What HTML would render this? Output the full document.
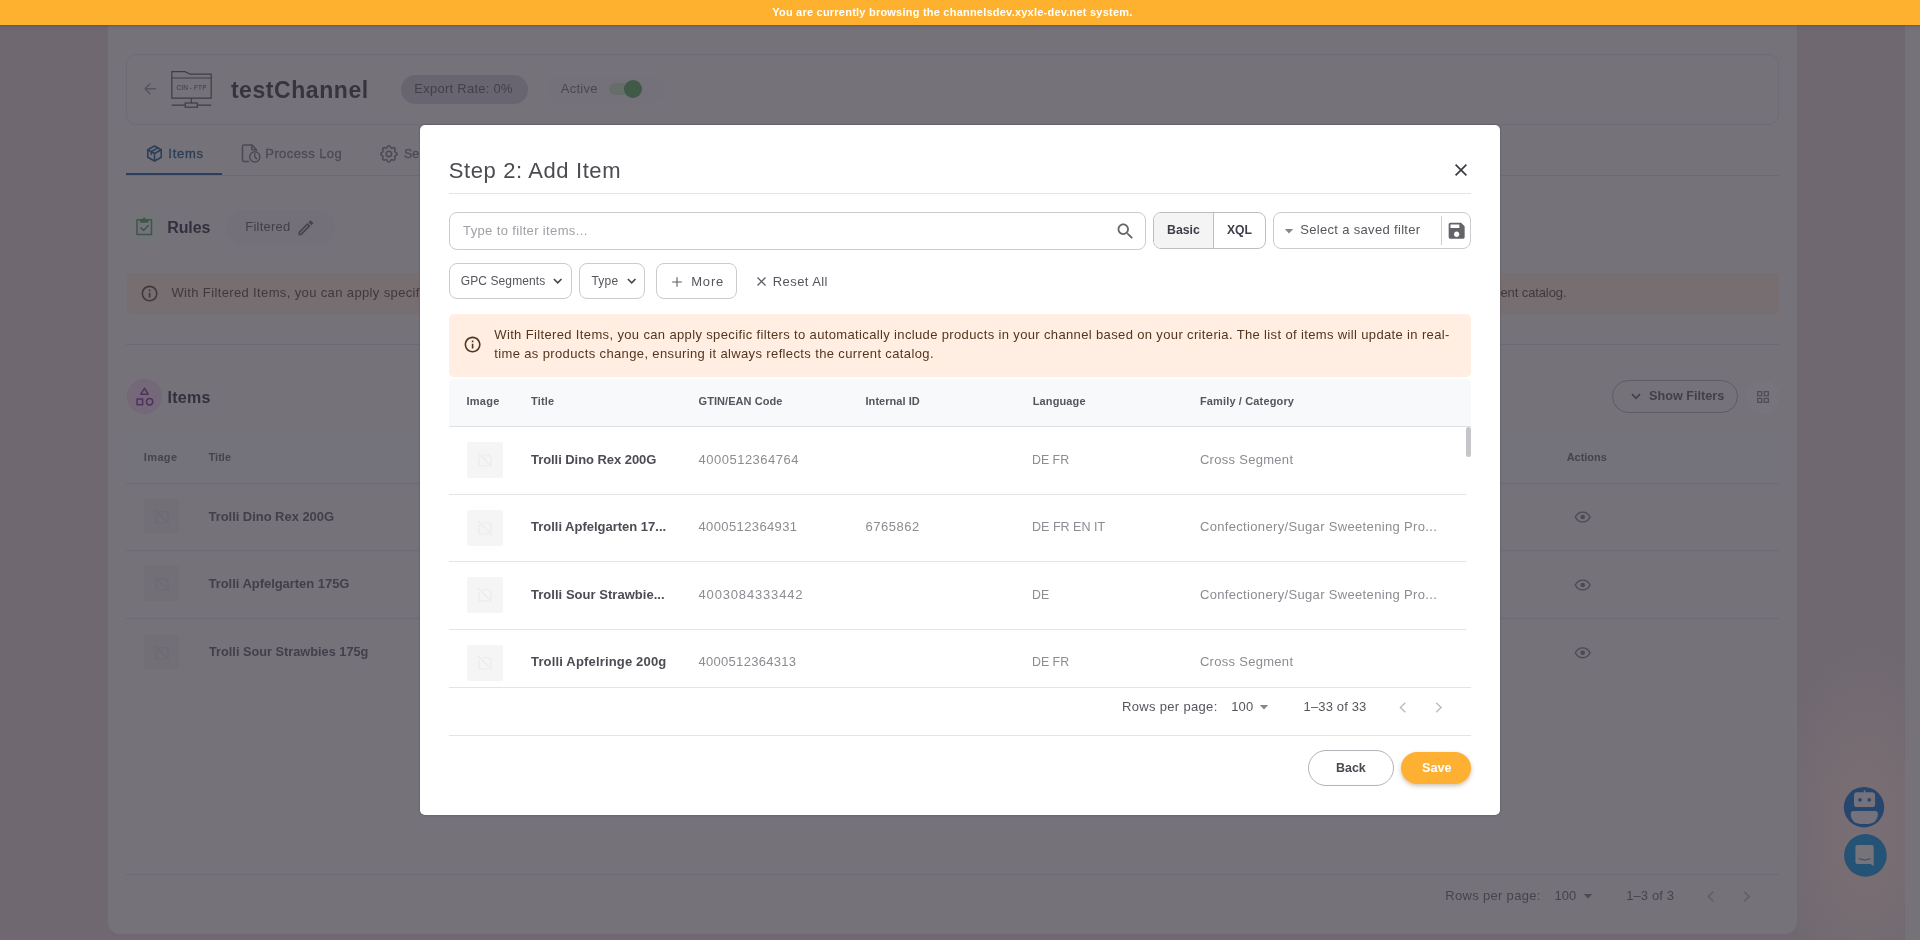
<!DOCTYPE html>
<html>
<head>
<meta charset="utf-8">
<title>Step 2: Add Item</title>
<style>
*{box-sizing:border-box;margin:0;padding:0}
html,body{width:1920px;height:940px;overflow:hidden}
body{font-family:"Liberation Sans",sans-serif;background:#6f6870;position:relative}
.a{position:absolute}
.t{position:absolute;white-space:pre;line-height:1}
.L{position:absolute;left:0;top:0;width:1920px;height:940px;will-change:transform}
svg{position:absolute;overflow:visible}
#topbar{left:0;top:0;width:1920px;height:25px;background:#fdb12e;box-shadow:0 0 1px rgba(90,60,0,.85),0 2px 4px rgba(70,60,80,.22)}
#rband{left:1797px;top:25px;width:108px;height:915px;background:#6f6870}
#rscroll{left:1905px;top:25px;width:15px;height:915px;background:#75727a}
#glow{left:1797px;top:640px;width:108px;height:300px;background:radial-gradient(ellipse 90px 190px at 68px 190px,rgba(121,110,115,1) 0%,rgba(119,109,115,.85) 50%,rgba(112,104,111,0) 100%)}
#panel{left:108px;top:0;width:1689px;height:934px;background:#75727a;border-radius:0 0 12px 12px}
#card{left:126px;top:54px;width:1653px;height:71px;border:1px solid #6e6b74;border-radius:10px}
.ln{position:absolute;height:1px;background:#6d6a73}
#modal{left:419.700px;top:124.600px;width:1080px;height:690.200px;background:#fff;border-radius:5px;box-shadow:0 0 2px rgba(45,40,55,.45)}
.hr{position:absolute;height:1px;background:#e4e4e8}
.box{position:absolute;border:1px solid #cbcbcf;border-radius:8px;background:#fff}
.ph{position:absolute;width:36px;height:36px;background:#f5f5f6;border-radius:2px}
.bph{position:absolute;width:35px;height:35px;background:#726f77;border-radius:2px}
</style>
</head>
<body>
<!-- ============ dimmed background page ============ -->
<div id="rband" class="a"></div>
<div id="glow" class="a"></div>
<div id="rscroll" class="a"></div>
<div id="panel" class="a"></div>
<div id="card" class="a"></div>
<!-- back arrow -->
<svg style="left:0;top:0" width="1920" height="940" viewBox="0 0 1920 940"><path d="M155.500 88.800 H145 M149.800 84 L145 88.800 L149.800 93.600" stroke="#58555f" stroke-width="1.500" fill="none" stroke-linecap="round" stroke-linejoin="round"/></svg>
<!-- folder ftp icon -->
<svg style="left:0;top:0;will-change:transform" width="1920" height="940" viewBox="0 0 1920 940"><g fill="none" stroke="#403c47" stroke-width="1.200"><path d="M171.800 98.200 V71.600 H184.800 L190.300 74.200 H211.200 V98.200 Z"/><path d="M171.800 78 H211.200"/><path d="M191.300 98.200 V103"/><path d="M171.800 105.100 H185.200 M197.300 105.100 H211.200"/><rect x="185.200" y="103" width="12.100" height="4.200"/></g><text x="191.500" y="90" text-anchor="middle" font-family="Liberation Sans, sans-serif" font-size="6.400" letter-spacing="0.150" fill="#3d3944">CIN - FTP</text></svg>
<!-- export pill / active pill -->
<div class="a" style="left:401px;top:75px;width:127px;height:29px;border-radius:15px;background:#686570"></div>
<div class="a" style="left:548px;top:75px;width:116px;height:29px;border-radius:15px;background:#74717a"></div>
<div class="a" style="left:609px;top:83px;width:33px;height:12px;border-radius:6px;background:#666e69"></div>
<div class="a" style="left:624px;top:80px;width:18px;height:18px;border-radius:9px;background:#3f5a46"></div>
<!-- tabs -->
<div class="ln" style="left:126px;top:175px;width:1653px"></div>
<div class="a" style="left:126px;top:173px;width:96px;height:2px;background:#2b3f5d"></div>
<svg style="left:145px;top:144px" width="19" height="19" viewBox="0 0 24 24"><g fill="none" stroke="#2b3e5a" stroke-width="2" stroke-linejoin="round" stroke-linecap="round"><path d="M12 2.5l8.5 4.8v9.4L12 21.5l-8.500-4.800V7.300z"/><path d="M12 12l8.500-4.700M12 12v9.500M12 12L3.500 7.300M16.300 4.900l-8.500 4.800v3.400"/></g></svg>
<svg style="left:0;top:0" width="1920" height="940" viewBox="0 0 1920 940"><g fill="none" stroke="#4d4a54" stroke-width="1.500" stroke-linejoin="round" stroke-linecap="round"><path d="M248.500 161.600 H244 a1.500 1.500 0 0 1 -1.500 -1.500 V146.600 a1.500 1.500 0 0 1 1.500 -1.500 H252 L256.300 149.500 V150.500"/><path d="M251.800 145.300 V149.700 H256.200"/><circle cx="254.800" cy="156.800" r="5.100"/><path d="M254.800 153.800 V157 L256.600 158.600"/></g></svg>
<svg style="left:377.600px;top:142.900px" width="21.800" height="21.800" viewBox="0 0 24 24"><g fill="none" stroke="#4d4a54" stroke-width="1.700" stroke-linejoin="round"><path d="M10.325 4.317c.426-1.756 2.924-1.756 3.350 0a1.724 1.724 0 0 0 2.573 1.066c1.543-.94 3.310.826 2.370 2.370a1.724 1.724 0 0 0 1.065 2.572c1.756.426 1.756 2.924 0 3.350a1.724 1.724 0 0 0-1.066 2.573c.94 1.543-.826 3.310-2.370 2.370a1.724 1.724 0 0 0-2.572 1.065c-.426 1.756-2.924 1.756-3.350 0a1.724 1.724 0 0 0-2.573-1.066c-1.543.94-3.310-.826-2.370-2.370a1.724 1.724 0 0 0-1.065-2.572c-1.756-.426-1.756-2.924 0-3.350a1.724 1.724 0 0 0 1.066-2.573c-.94-1.543.826-3.310 2.370-2.370 1 .608 2.296.070 2.572-1.065z"/><circle cx="12" cy="12" r="3"/></g></svg>
<!-- Rules -->
<div class="a" style="left:126.500px;top:209.500px;width:35px;height:35px;border-radius:18px;background:#727478"></div>
<svg style="left:0;top:0" width="1920" height="940" viewBox="0 0 1920 940"><g fill="none" stroke="#40544a" stroke-width="1.500" stroke-linejoin="round" stroke-linecap="round"><path d="M141 219.800 H137 V234.500 H151.500 V219.800 H147.500"/><path d="M140.800 220 H147.700 V222 H140.800 Z" fill="#40544a"/><path d="M143 219.800 a1.300 1.300 0 0 1 2.600 0"/><path d="M140.900 227.900 L143.500 230.500 L148.300 225.500"/></g></svg>
<div class="a" style="left:227px;top:210px;width:108px;height:35px;border-radius:18px;background:#737079"></div>
<svg style="left:295.600px;top:218px" width="19.600" height="19.600" viewBox="0 0 24 24"><path fill="#47434d" d="M14.060 9.020l.920.920L5.920 19H5v-.920l9.060-9.060M17.660 3c-.250 0-.510.100-.700.290l-1.830 1.830 3.750 3.750 1.830-1.830c.390-.390.390-1.020 0-1.410l-2.340-2.340c-.200-.200-.450-.290-.710-.290zm-3.600 3.190L3 17.250V21h3.750L17.810 9.940l-3.750-3.750z"/></svg>
<!-- bg alert -->
<div class="a" style="left:127px;top:272.500px;width:1652px;height:41.500px;border-radius:4px;background:#776e72"></div>
<svg style="left:140.200px;top:284.400px" width="19.200" height="19.200" viewBox="0 0 24 24"><path fill="#443739" d="M11 7h2v2h-2zm0 4h2v6h-2zm1-9C6.480 2 2 6.480 2 12s4.480 10 10 10 10-4.480 10-10S17.520 2 12 2zm0 18c-4.410 0-8-3.590-8-8s3.590-8 8-8 8 3.590 8 8-3.590 8-8 8z"/></svg>
<div class="ln" style="left:126px;top:344px;width:1653px"></div>
<!-- Items heading -->
<div class="a" style="left:126.500px;top:379px;width:35px;height:35px;border-radius:18px;background:#746879"></div>
<svg style="left:0;top:0" width="1920" height="940" viewBox="0 0 1920 940"><g fill="none" stroke="#50325f" stroke-width="1.500" stroke-linejoin="round"><path d="M144.500 388.300 L148.200 394.200 H140.800 Z"/><rect x="137" y="399.100" width="5.600" height="5.600"/><circle cx="149.600" cy="401.700" r="3.200"/></g></svg>
<!-- show filters -->
<div class="a" style="left:1612px;top:380px;width:126px;height:33px;border-radius:17px;border:1px solid #5e5b65"></div>
<svg style="left:1630.500px;top:393px" width="10" height="7" viewBox="0 0 10 7"><path d="M1 1.200 L5 5.300 L9 1.200" stroke="#423f49" stroke-width="1.700" fill="none"/></svg>
<div class="a" style="left:1746px;top:380px;width:34px;height:34px;border-radius:17px;background:#77747c"></div>
<svg style="left:1755px;top:389px" width="16" height="16" viewBox="0 0 24 24"><path fill="#504d57" d="M3 3v8h8V3H3zm6 6H5V5h4v4zm-6 4v8h8v-8H3zm6 6H5v-4h4v4zm4-16v8h8V3h-8zm6 6h-4V5h4v4zm-6 4v8h8v-8h-8zm6 6h-4v-4h4v4z"/></svg>
<!-- bg table -->
<div class="a" style="left:126px;top:433px;width:1653px;height:50px;background:#74727a;border-radius:4px 4px 0 0"></div>
<div class="ln" style="left:126px;top:483px;width:1653px"></div>
<div class="ln" style="left:126px;top:550px;width:1653px"></div>
<div class="ln" style="left:126px;top:618px;width:1653px"></div>
<div class="ln" style="left:126px;top:874px;width:1653px"></div>
<div class="bph" style="left:144px;top:499px"></div>
<div class="bph" style="left:144px;top:566px"></div>
<div class="bph" style="left:144px;top:635px"></div>
<svg style="left:152.500px;top:507.500px" width="18" height="18" viewBox="0 0 24 24"><g fill="none" stroke="#6e6a73" stroke-width="1.600"><path d="M8 5h9l3 3v10M17 20H4V8"/><path d="M3 3l18 18"/></g></svg>
<svg style="left:152.500px;top:574.500px" width="18" height="18" viewBox="0 0 24 24"><g fill="none" stroke="#6e6a73" stroke-width="1.600"><path d="M8 5h9l3 3v10M17 20H4V8"/><path d="M3 3l18 18"/></g></svg>
<svg style="left:152.500px;top:643.500px" width="18" height="18" viewBox="0 0 24 24"><g fill="none" stroke="#6e6a73" stroke-width="1.600"><path d="M8 5h9l3 3v10M17 20H4V8"/><path d="M3 3l18 18"/></g></svg>
<!-- eyes -->
<svg style="left:0;top:0" width="1920" height="940" viewBox="0 0 1920 940"><g fill="none" stroke="#4d4a54" stroke-width="1.400"><path d="M1575.300 517.0 C1577 513.7 1579.600 512.1 1582.700 512.1 C1585.800 512.1 1588.400 513.7 1590.100 517.0 C1588.400 520.3 1585.800 521.9 1582.700 521.9 C1579.600 521.9 1577 520.3 1575.300 517.0 Z"/></g><circle cx="1582.700" cy="517.0" r="2.300" fill="#4d4a54"/></svg>
<svg style="left:0;top:0" width="1920" height="940" viewBox="0 0 1920 940"><g fill="none" stroke="#4d4a54" stroke-width="1.400"><path d="M1575.300 585.0 C1577 581.7 1579.600 580.1 1582.700 580.1 C1585.800 580.1 1588.400 581.7 1590.100 585.0 C1588.400 588.3 1585.800 589.9 1582.700 589.9 C1579.600 589.9 1577 588.3 1575.300 585.0 Z"/></g><circle cx="1582.700" cy="585.0" r="2.300" fill="#4d4a54"/></svg>
<svg style="left:0;top:0" width="1920" height="940" viewBox="0 0 1920 940"><g fill="none" stroke="#4d4a54" stroke-width="1.400"><path d="M1575.300 652.8 C1577 649.5 1579.600 647.9 1582.700 647.9 C1585.800 647.9 1588.400 649.5 1590.100 652.8 C1588.400 656.1 1585.800 657.7 1582.700 657.7 C1579.600 657.7 1577 656.1 1575.300 652.8 Z"/></g><circle cx="1582.700" cy="652.8" r="2.300" fill="#4d4a54"/></svg>
<!-- bg pagination -->
<svg style="left:1576px;top:883.500px" width="24" height="24" viewBox="0 0 24 24"><path fill="#4d4a54" d="M7.800 10l4.200 4.600 4.200-4.600z"/></svg>
<svg style="left:1707.300px;top:890.500px" width="7.500" height="11" viewBox="0 0 7.500 11"><path d="M6.300 0.800 L1.400 5.500 L6.300 10.200" stroke="#605d66" stroke-width="1.500" fill="none"/></svg>
<svg style="left:1743.200px;top:890.500px" width="7.500" height="11" viewBox="0 0 7.500 11"><path d="M1.200 0.800 L6.100 5.500 L1.200 10.200" stroke="#605d66" stroke-width="1.500" fill="none"/></svg>
<!-- floating chat buttons -->
<svg style="left:0;top:0" width="1920" height="940" viewBox="0 0 1920 940">
<circle cx="1864" cy="807.200" r="20.200" fill="#27466e"/>
<g fill="#76727b"><rect x="1854" y="792.200" width="21.100" height="14.900" rx="3.200"/><rect x="1863.700" y="790.300" width="1.700" height="2.600" rx="0.800"/><path d="M1853.700 810.900 H1874.900 A3 3 0 0 1 1877.900 813.900 V814.500 A9.400 9.400 0 0 1 1868.500 823.900 H1860.100 A9.400 9.400 0 0 1 1850.700 814.500 V813.900 A3 3 0 0 1 1853.700 810.900 Z"/></g>
<circle cx="1860" cy="799.900" r="1.800" fill="#27466e"/><circle cx="1869.200" cy="799.900" r="1.800" fill="#27466e"/>
<circle cx="1865.400" cy="855.400" r="21.300" fill="#245375"/>
<path fill="#76737b" d="M1857.400 845.100 H1871.700 A2 2 0 0 1 1873.700 847.100 V866.300 L1870.600 864.100 H1857.400 A2 2 0 0 1 1855.400 862.100 V847.100 A2 2 0 0 1 1857.400 845.100 Z"/>
<path d="M1859 858.800 Q1864.700 861.600 1870.500 858.800" stroke="#245375" stroke-width="1" fill="none" stroke-linecap="round"/>
</svg>

<div class="L">
<div class="t" style="left:230.90px;top:79px;font-size:23px;font-weight:bold;color:#38343f;letter-spacing:0.562px">testChannel</div>
<div class="t" style="left:414.30px;top:82px;font-size:13px;color:#423f49;letter-spacing:0.253px">Export Rate: 0%</div>
<div class="t" style="left:560.80px;top:82px;font-size:13px;color:#4a4751;letter-spacing:0.259px">Active</div>
<div class="t" style="left:168.30px;top:147px;font-size:13px;-webkit-text-stroke:0.3px #2b3e5a;color:#2b3e5a;letter-spacing:0.726px">Items</div>
<div class="t" style="left:265.30px;top:147px;font-size:13px;-webkit-text-stroke:0.3px #4d4a54;color:#4d4a54;letter-spacing:0.413px">Process Log</div>
<div class="t" style="left:404.20px;top:147px;font-size:13px;-webkit-text-stroke:0.3px #4d4a54;color:#4d4a54;letter-spacing:0.000px;transform:scaleX(0.9619);transform-origin:0 0">Se</div>
<div class="t" style="left:167.18px;top:220px;font-size:16px;font-weight:bold;color:#332f3d;letter-spacing:-0.090px">Rules</div>
<div class="t" style="left:245.22px;top:220px;font-size:13px;color:#423f49;letter-spacing:0.232px">Filtered</div>
<div class="t" style="left:171.40px;top:286px;font-size:13px;color:#443739;letter-spacing:0.368px">With Filtered Items, you can apply specif</div>
<div class="t" style="left:1500.50px;top:286px;font-size:13px;color:#443739;letter-spacing:-0.111px">ent catalog.</div>
<div class="t" style="left:167.44px;top:390px;font-size:16px;font-weight:bold;color:#332f3d;letter-spacing:0.316px">Items</div>
<div class="t" style="left:1648.80px;top:389px;font-size:13px;font-weight:bold;color:#423f49;letter-spacing:0.000px;transform:scaleX(0.9729);transform-origin:0 0">Show Filters</div>
<div class="t" style="left:143.80px;top:452px;font-size:11px;font-weight:bold;color:#46434d;letter-spacing:0.371px">Image</div>
<div class="t" style="left:208.50px;top:452px;font-size:11px;font-weight:bold;color:#46434d;letter-spacing:0.045px">Title</div>
<div class="t" style="left:1566.70px;top:452px;font-size:11px;font-weight:bold;color:#46434d;letter-spacing:-0.024px">Actions</div>
<div class="t" style="left:208.50px;top:510px;font-size:13px;font-weight:bold;color:#433f4a;letter-spacing:-0.045px">Trolli Dino Rex 200G</div>
<div class="t" style="left:208.50px;top:577px;font-size:13px;font-weight:bold;color:#433f4a;letter-spacing:-0.041px">Trolli Apfelgarten 175G</div>
<div class="t" style="left:208.50px;top:645px;font-size:13px;font-weight:bold;color:#433f4a;letter-spacing:0.000px;transform:scaleX(0.9805);transform-origin:0 0">Trolli Sour Strawbies 175g</div>
<div class="t" style="left:1445.20px;top:889px;font-size:13px;color:#46434d;letter-spacing:0.321px">Rows per page:</div>
<div class="t" style="left:1554.44px;top:889px;font-size:13px;color:#46434d;letter-spacing:0.053px">100</div>
<div class="t" style="left:1626.20px;top:889px;font-size:13px;color:#46434d;letter-spacing:0.100px">1–3 of 3</div>
</div>
<!-- ============ top bar ============ -->
<div id="topbar" class="a"></div>
<div class="L">
<div class="t" style="left:772.20px;top:7px;font-size:11px;font-weight:bold;color:#fff;letter-spacing:0.224px">You are currently browsing the channelsdev.xyxle-dev.net system.</div>
</div>
<!-- ============ modal ============ -->
<div id="modal" class="a"></div>
<!-- close X -->
<svg style="left:1454.8px;top:163.8px" width="12" height="12" viewBox="0 0 12 12"><path d="M0.6 0.6 L11.4 11.4 M11.4 0.6 L0.6 11.4" stroke="#3c3c44" stroke-width="1.7" fill="none"/></svg>
<div class="hr" style="left:449px;top:193px;width:1022px"></div>
<!-- search input -->
<div class="box" style="left:449px;top:212px;width:697px;height:38px"></div>
<svg style="left:1115.200px;top:220.900px" width="20.860" height="20.860" viewBox="0 0 24 24"><path fill="#646468" d="M15.5 14h-.79l-.28-.27C15.41 12.59 16 11.11 16 9.5 16 5.91 13.09 3 9.5 3S3 5.91 3 9.5 5.91 16 9.5 16c1.61 0 3.09-.59 4.23-1.57l.27.28v.79l5 4.99L20.49 19l-4.99-5zm-6 0C7.01 14 5 11.99 5 9.5S7.01 5 9.5 5 14 7.01 14 9.5 11.99 14 9.5 14z"/></svg>
<!-- Basic / XQL toggle -->
<div class="box" style="left:1153px;top:212px;width:113px;height:37px;border-color:#bebec1;overflow:hidden"><div class="a" style="left:0;top:0;width:60px;height:35px;background:#f4f4f5;border-right:1px solid #bebec1"></div></div>
<!-- saved filter -->
<div class="box" style="left:1273px;top:212px;width:198px;height:37px"></div>
<svg style="left:1277px;top:219px" width="24" height="24" viewBox="0 0 24 24"><path fill="#85858a" d="M7.8 10l4.2 4.6 4.2-4.6z"/></svg>
<div class="a" style="left:1441px;top:216px;width:1px;height:29px;background:#d0d0d4"></div>
<svg style="left:1446.3px;top:220.2px" width="21.33" height="21.33" viewBox="0 0 24 24"><path fill="#646468" d="M17 3H5c-1.11 0-2 .9-2 2v14c0 1.1.89 2 2 2h14c1.1 0 2-.9 2-2V7l-4-4zm-5 16c-1.66 0-3-1.34-3-3s1.34-3 3-3 3 1.34 3 3-1.34 3-3 3zm3-10H5V5h10v4z"/></svg>
<!-- filter chips -->
<div class="box" style="left:449px;top:263px;width:123px;height:36px"></div>
<svg style="left:553.2px;top:278.2px" width="9.4" height="6.4" viewBox="0 0 9.4 6.4"><path d="M0.9 1 L4.7 4.9 L8.5 1" stroke="#44444c" stroke-width="1.6" fill="none"/></svg>
<div class="box" style="left:579px;top:263px;width:66px;height:36px"></div>
<svg style="left:626.5px;top:278.2px" width="9.4" height="6.4" viewBox="0 0 9.4 6.4"><path d="M0.9 1 L4.7 4.9 L8.5 1" stroke="#44444c" stroke-width="1.6" fill="none"/></svg>
<div class="box" style="left:656px;top:263px;width:81px;height:36px"></div>
<svg style="left:671.5px;top:276.6px" width="10" height="10" viewBox="0 0 10 10"><path d="M5 0.2 V9.8 M0.2 5 H9.8" stroke="#5b5b63" stroke-width="1.1" fill="none"/></svg>
<svg style="left:756.5px;top:277px" width="9" height="9" viewBox="0 0 9 9"><path d="M0.5 0.5 L8.5 8.5 M8.5 0.5 L0.5 8.5" stroke="#5b5b63" stroke-width="1.2" fill="none"/></svg>
<!-- alert -->
<div class="a" style="left:449px;top:314.400px;width:1022px;height:62.600px;background:#ffeee1;border-radius:5px"></div>
<svg style="left:463.4px;top:335.1px" width="19.2" height="19.2" viewBox="0 0 24 24"><path fill="#53361f" d="M11 7h2v2h-2zm0 4h2v6h-2zm1-9C6.48 2 2 6.48 2 12s4.48 10 10 10 10-4.48 10-10S17.52 2 12 2zm0 18c-4.41 0-8-3.59-8-8s3.59-8 8-8 8 3.59 8 8-3.59 8-8 8z"/></svg>
<!-- table header -->
<div class="a" style="left:449px;top:379px;width:1022px;height:47px;background:#f8f9fb;border-radius:4px 4px 0 0"></div>
<div class="hr" style="left:449px;top:426px;width:1022px;background:#dfe0e4"></div>
<!-- rows -->
<div class="hr" style="left:449px;top:494px;width:1017px"></div>
<div class="hr" style="left:449px;top:561px;width:1017px"></div>
<div class="hr" style="left:449px;top:629px;width:1017px"></div>
<div class="hr" style="left:449px;top:687px;width:1022px"></div>
<div class="hr" style="left:449px;top:735px;width:1022px"></div>
<!-- scrollbar thumb -->
<div class="a" style="left:1466px;top:427px;width:5px;height:30px;background:#c6c6ca;border-radius:3px"></div>
<!-- image placeholders -->
<div class="ph" style="left:467px;top:442px"></div>
<div class="ph" style="left:467px;top:510px"></div>
<div class="ph" style="left:467px;top:577px"></div>
<div class="ph" style="left:467px;top:645px"></div>
<svg style="left:476px;top:451px" width="18" height="18" viewBox="0 0 24 24"><g fill="none" stroke="#ebebec" stroke-width="1.6"><path d="M8 5h9l3 3v10M17 20H4V8"/><path d="M3 3l18 18"/></g></svg>
<svg style="left:476px;top:519px" width="18" height="18" viewBox="0 0 24 24"><g fill="none" stroke="#ebebec" stroke-width="1.6"><path d="M8 5h9l3 3v10M17 20H4V8"/><path d="M3 3l18 18"/></g></svg>
<svg style="left:476px;top:586px" width="18" height="18" viewBox="0 0 24 24"><g fill="none" stroke="#ebebec" stroke-width="1.6"><path d="M8 5h9l3 3v10M17 20H4V8"/><path d="M3 3l18 18"/></g></svg>
<svg style="left:476px;top:654px" width="18" height="18" viewBox="0 0 24 24"><g fill="none" stroke="#ebebec" stroke-width="1.6"><path d="M8 5h9l3 3v10M17 20H4V8"/><path d="M3 3l18 18"/></g></svg>
<!-- pagination icons -->
<svg style="left:1251.8px;top:695px" width="24" height="24" viewBox="0 0 24 24"><path fill="#85858a" d="M7.8 10l4.2 4.6 4.2-4.6z"/></svg>
<svg style="left:1399px;top:702px" width="7.5" height="11" viewBox="0 0 7.5 11"><path d="M6.3 0.8 L1.4 5.5 L6.3 10.2" stroke="#bebec2" stroke-width="1.5" fill="none"/></svg>
<svg style="left:1435.3px;top:702px" width="7.5" height="11" viewBox="0 0 7.5 11"><path d="M1.2 0.8 L6.1 5.5 L1.2 10.2" stroke="#bebec2" stroke-width="1.5" fill="none"/></svg>
<!-- buttons -->
<div class="a" style="left:1308px;top:750px;width:86px;height:36px;border:1px solid #b3b3b9;border-radius:18px;background:#fff"></div>
<div class="a" style="left:1401px;top:752px;width:70px;height:32px;border-radius:16px;background:#fdb032;box-shadow:0 2px 4px rgba(120,90,30,.35)"></div>

<div class="L">
<div class="t" style="left:448.75px;top:160px;font-size:22px;color:#4b4b52;letter-spacing:0.609px">Step 2: Add Item</div>
<div class="t" style="left:463.10px;top:224px;font-size:13px;color:#a0a0a6;letter-spacing:0.356px">Type to filter items...</div>
<div class="t" style="left:1167.10px;top:223px;font-size:13px;font-weight:bold;color:#3e3e48;letter-spacing:0.000px;transform:scaleX(0.9480);transform-origin:0 0">Basic</div>
<div class="t" style="left:1227.10px;top:223px;font-size:13px;font-weight:bold;color:#3e3e48;letter-spacing:0.000px;transform:scaleX(0.9351);transform-origin:0 0">XQL</div>
<div class="t" style="left:1300.20px;top:223px;font-size:13px;color:#55555d;letter-spacing:0.327px">Select a saved filter</div>
<div class="t" style="left:460.80px;top:275px;font-size:12px;color:#55555d;letter-spacing:0.093px">GPC Segments</div>
<div class="t" style="left:591.50px;top:275px;font-size:12px;color:#55555d;letter-spacing:0.195px">Type</div>
<div class="t" style="left:691.22px;top:275px;font-size:13px;color:#55555d;letter-spacing:0.805px">More</div>
<div class="t" style="left:772.74px;top:275px;font-size:13px;color:#55555d;letter-spacing:0.431px">Reset All</div>
<div class="t" style="left:494.25px;top:328px;font-size:13px;color:#53361f;letter-spacing:0.360px">With Filtered Items, you can apply specific filters to automatically include products in your channel based on your criteria. The list of items will update in real-</div>
<div class="t" style="left:494.25px;top:347px;font-size:13px;color:#53361f;letter-spacing:0.370px">time as products change, ensuring it always reflects the current catalog.</div>
<div class="t" style="left:466.60px;top:396px;font-size:11px;font-weight:bold;color:#55555d;letter-spacing:0.216px">Image</div>
<div class="t" style="left:531.00px;top:396px;font-size:11px;font-weight:bold;color:#55555d;letter-spacing:0.207px">Title</div>
<div class="t" style="left:698.50px;top:396px;font-size:11px;font-weight:bold;color:#55555d;letter-spacing:0.073px">GTIN/EAN Code</div>
<div class="t" style="left:865.50px;top:396px;font-size:11px;font-weight:bold;color:#55555d;letter-spacing:0.050px">Internal ID</div>
<div class="t" style="left:1032.80px;top:396px;font-size:11px;font-weight:bold;color:#55555d;letter-spacing:0.107px">Language</div>
<div class="t" style="left:1199.92px;top:396px;font-size:11px;font-weight:bold;color:#55555d;letter-spacing:0.149px">Family / Category</div>
<div class="t" style="left:531.00px;top:453px;font-size:13px;font-weight:bold;color:#4c4c54;letter-spacing:-0.055px">Trolli Dino Rex 200G</div>
<div class="t" style="left:698.50px;top:453px;font-size:13px;color:#8c8c92;letter-spacing:0.500px">4000512364764</div>
<div class="t" style="left:1031.84px;top:453px;font-size:13px;color:#8c8c92;letter-spacing:0.000px;transform:scaleX(0.9503);transform-origin:0 0">DE FR</div>
<div class="t" style="left:1199.92px;top:453px;font-size:13px;color:#8c8c92;letter-spacing:0.291px">Cross Segment</div>
<div class="t" style="left:531.00px;top:520px;font-size:13px;font-weight:bold;color:#4c4c54;letter-spacing:-0.010px">Trolli Apfelgarten 17...</div>
<div class="t" style="left:698.50px;top:520px;font-size:13px;color:#8c8c92;letter-spacing:0.382px">4000512364931</div>
<div class="t" style="left:865.50px;top:520px;font-size:13px;color:#8c8c92;letter-spacing:0.513px">6765862</div>
<div class="t" style="left:1031.84px;top:520px;font-size:13px;color:#8c8c92;letter-spacing:0.000px;transform:scaleX(0.9646);transform-origin:0 0">DE FR EN IT</div>
<div class="t" style="left:1199.92px;top:520px;font-size:13px;color:#8c8c92;letter-spacing:0.336px">Confectionery/Sugar Sweetening Pro...</div>
<div class="t" style="left:531.00px;top:588px;font-size:13px;font-weight:bold;color:#4c4c54;letter-spacing:0.032px">Trolli Sour Strawbie...</div>
<div class="t" style="left:698.50px;top:588px;font-size:13px;color:#8c8c92;letter-spacing:0.833px">4003084333442</div>
<div class="t" style="left:1031.84px;top:588px;font-size:13px;color:#8c8c92;letter-spacing:0.000px;transform:scaleX(0.9456);transform-origin:0 0">DE</div>
<div class="t" style="left:1199.92px;top:588px;font-size:13px;color:#8c8c92;letter-spacing:0.336px">Confectionery/Sugar Sweetening Pro...</div>
<div class="t" style="left:531.00px;top:655px;font-size:13px;font-weight:bold;color:#4c4c54;letter-spacing:0.169px">Trolli Apfelringe 200g</div>
<div class="t" style="left:698.50px;top:655px;font-size:13px;color:#8c8c92;letter-spacing:0.292px">4000512364313</div>
<div class="t" style="left:1031.84px;top:655px;font-size:13px;color:#8c8c92;letter-spacing:0.000px;transform:scaleX(0.9503);transform-origin:0 0">DE FR</div>
<div class="t" style="left:1199.92px;top:655px;font-size:13px;color:#8c8c92;letter-spacing:0.291px">Cross Segment</div>
<div class="t" style="left:1122.02px;top:700px;font-size:13px;color:#55555d;letter-spacing:0.321px">Rows per page:</div>
<div class="t" style="left:1231.22px;top:700px;font-size:13px;color:#55555d;letter-spacing:0.168px">100</div>
<div class="t" style="left:1303.56px;top:700px;font-size:13px;color:#55555d;letter-spacing:0.137px">1–33 of 33</div>
<div class="t" style="left:1335.80px;top:761px;font-size:13px;font-weight:bold;color:#4a4a52;letter-spacing:0.000px;transform:scaleX(0.9589);transform-origin:0 0">Back</div>
<div class="t" style="left:1421.50px;top:761px;font-size:13px;font-weight:bold;color:#fff;letter-spacing:0.000px;transform:scaleX(0.9712);transform-origin:0 0">Save</div>
</div>
</body>
</html>
